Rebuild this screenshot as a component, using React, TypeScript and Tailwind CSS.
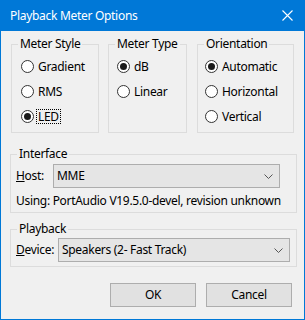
import React from "react";

function Radio({ checked, label, focus }: { checked?: boolean; label: string; focus?: boolean }) {
  return (
    <div className="flex items-center h-[25px]">
      <span className="w-[13px] h-[13px] rounded-full border border-[#333333] bg-white flex items-center justify-center shrink-0">
        {checked && <span className="w-[7px] h-[7px] rounded-full bg-[#1a1a1a]" />}
      </span>
      <span
        className={
          focus
            ? "ml-[2px] px-[1px] leading-[13px] border border-dotted border-black"
            : "ml-[2px] px-[1px] leading-[13px] border border-transparent"
        }
      >
        {label}
      </span>
    </div>
  );
}

function Chevron() {
  return (
    <svg width="9" height="5" viewBox="0 0 9 5" className="shrink-0">
      <polyline points="0.5,0.5 4.5,4.5 8.5,0.5" fill="none" stroke="#555555" strokeWidth="1" />
    </svg>
  );
}

function Combo({ value, width }: { value: string; width: string }) {
  return (
    <div
      className={
        width === "host"
          ? "w-[227px] h-[24px] bg-[#e5e5e5] border border-[#adadad] flex items-center pl-[3px] pr-[6px] justify-between"
          : "w-[232px] h-[24px] bg-[#e5e5e5] border border-[#adadad] flex items-center pl-[3px] pr-[6px] justify-between"
      }
    >
      <span>{value}</span>
      <Chevron />
    </div>
  );
}

export default function App() {
  return (
    <div
      className="w-[305px] h-[320px] bg-[#0078d7] flex flex-col text-[12px] tracking-[-0.3px] text-black"
      style={{ fontFamily: '"Noto Sans", "Segoe UI", sans-serif' }}
    >
      <div className="h-[31px] shrink-0 flex items-center justify-between pl-[10px] pr-[12px] text-white">
        <span className="leading-[16px]">Playback Meter Options</span>
        <svg width="11" height="11" viewBox="0 0 11 11">
          <path d="M0.5 0.5 L10.5 10.5 M10.5 0.5 L0.5 10.5" stroke="white" strokeWidth="1.1" fill="none" />
        </svg>
      </div>
      <div className="flex-1 mx-[1px] mb-[1px] bg-[#f0f0f0] flex flex-col leading-[16px]">
        <div className="flex mt-[5px] pl-[10px]">
          <fieldset className="w-[88px] h-[97px] border border-[#dcdcdc]">
            <legend className="ml-[6px] px-[2px]">Meter Style</legend>
            <div className="pl-[9px] pt-[2px]">
              <Radio label="Gradient" />
              <Radio label="RMS" />
              <Radio label="LED" checked focus />
            </div>
          </fieldset>
          <fieldset className="w-[79px] h-[97px] ml-[9px] border border-[#dcdcdc]">
            <legend className="ml-[6px] px-[2px]">Meter Type</legend>
            <div className="pl-[8px] pt-[2px]">
              <Radio label="dB" checked />
              <Radio label="Linear" />
            </div>
          </fieldset>
          <fieldset className="w-[97px] h-[97px] ml-[10px] border border-[#dcdcdc]">
            <legend className="ml-[6px] px-[2px]">Orientation</legend>
            <div className="pl-[7px] pt-[2px]">
              <Radio label="Automatic" checked />
              <Radio label="Horizontal" />
              <Radio label="Vertical" />
            </div>
          </fieldset>
        </div>

        <fieldset className="ml-[9px] mt-[13px] w-[287px] h-[67px] border border-[#dcdcdc]">
          <legend className="ml-[6px] px-[2px]">Interface</legend>
          <div className="pl-[5px] pt-[2px]">
            <div className="flex items-center">
              <span className="w-[37px]">
                <span className="underline">H</span>ost:
              </span>
              <Combo value="MME" width="host" />
            </div>
            <div className="mt-[5px]">Using: PortAudio V19.5.0-devel, revision unknown</div>
          </div>
        </fieldset>

        <fieldset className="ml-[9px] mt-[8px] w-[287px] h-[46px] border border-[#dcdcdc]">
          <legend className="ml-[6px] px-[2px]">Playback</legend>
          <div className="pl-[5px] pt-[1px]">
            <div className="flex items-center">
              <span className="w-[42px]">
                <span className="underline">D</span>evice:
              </span>
              <Combo value="Speakers (2- Fast Track)" width="device" />
            </div>
          </div>
        </fieldset>

        <div className="flex justify-end gap-[10px] mt-[16px] pr-[12px]">
          <button className="w-[86px] h-[24px] bg-[#e1e1e1] border border-[#adadad]">OK</button>
          <button className="w-[86px] h-[24px] bg-[#e1e1e1] border border-[#adadad]">Cancel</button>
        </div>
      </div>
    </div>
  );
}
